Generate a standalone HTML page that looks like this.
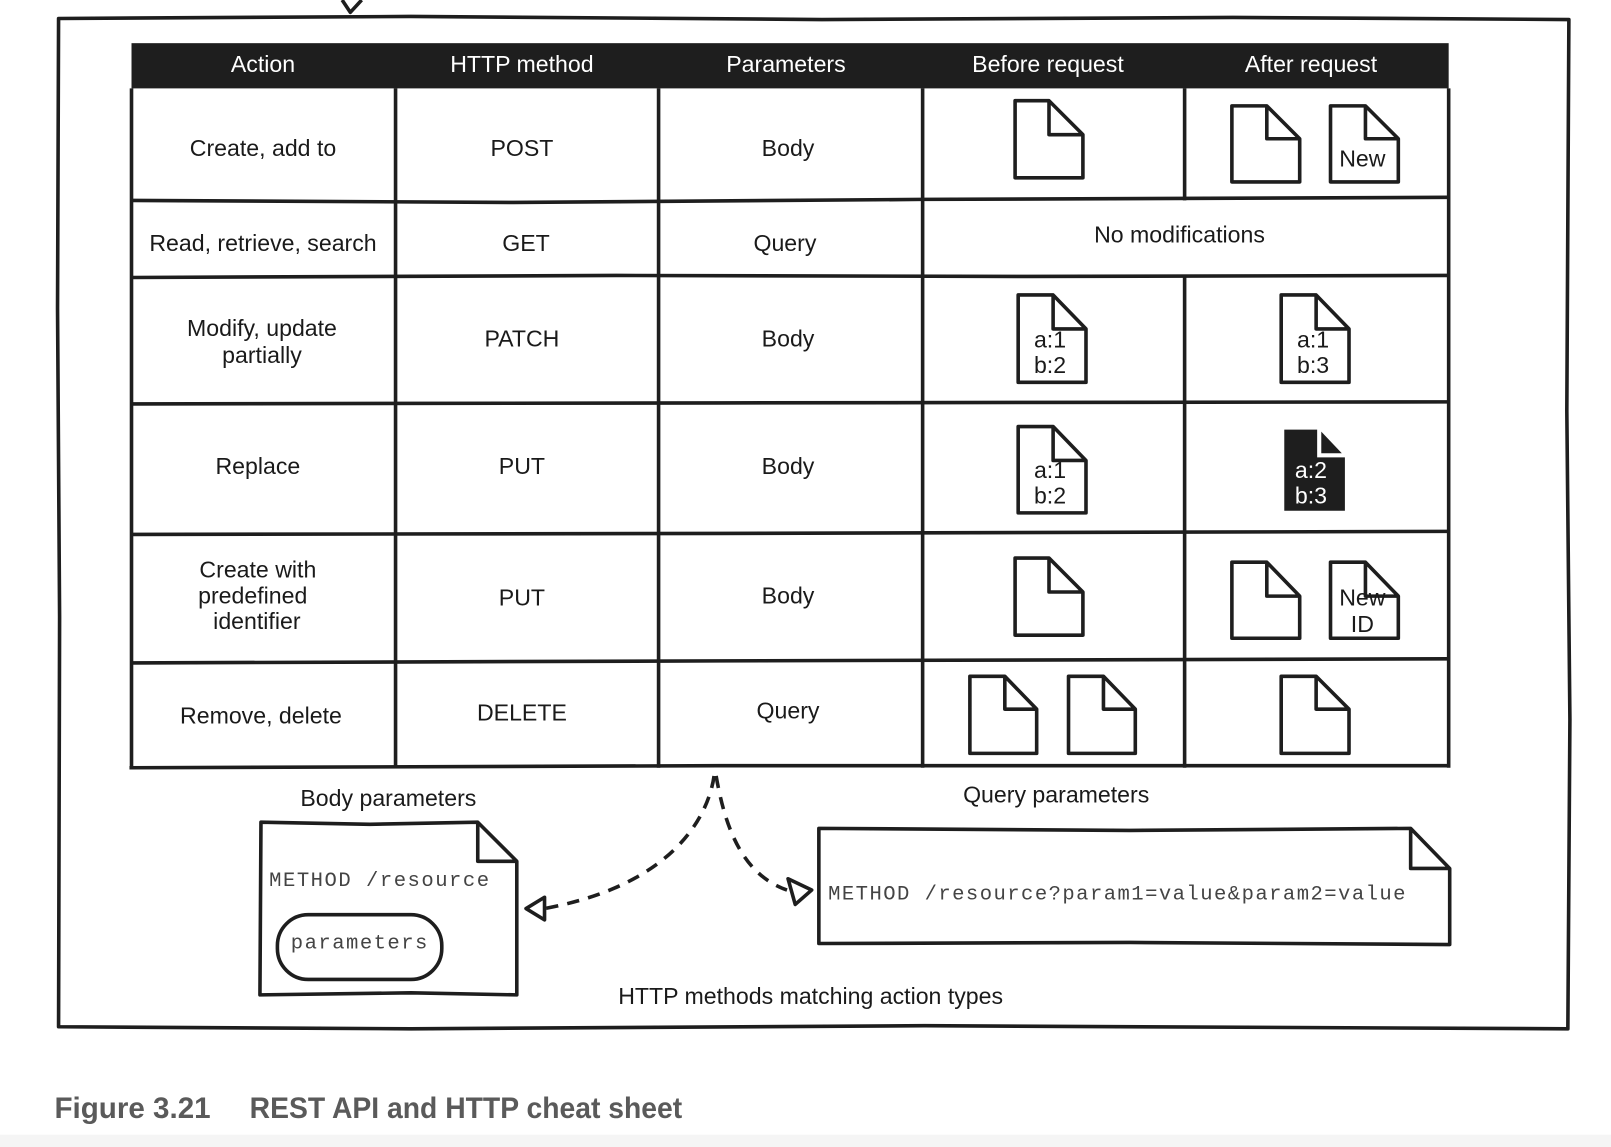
<!DOCTYPE html>
<html><head><meta charset="utf-8"><style>
html,body{margin:0;padding:0;background:#fff;width:1611px;height:1147px;overflow:hidden}
svg{display:block}
.t{font-family:"Liberation Sans",sans-serif;font-size:22.5px;fill:#1a1a1a;text-anchor:middle}
.h{fill:#fff}
.m{font-family:"Liberation Mono",monospace;font-size:20px;fill:#444}
.ln{stroke:#1e1e1e;stroke-width:3.5;fill:none;stroke-linejoin:round}
.doc{stroke:#1e1e1e;stroke-width:3.5;fill:#fff;stroke-linejoin:round}
</style></head><body>
<svg width="1611" height="1147" viewBox="0 0 1568 1116" preserveAspectRatio="none">
<rect x="0" y="1104" width="1568" height="12" fill="#f5f5f5"/>
<path class="ln" d="M333 0 L341 12 L352 0"/>
<path class="ln" d="M57 18 L400 16 L800 19 L1200 17 L1527 19 L1525 400 L1528 700 L1526 1001 L900 998 L400 1001 L57 999 L58 600 L56 300 Z"/>
<rect x="128" y="42" width="1282" height="44" fill="#1e1e1e"/>
<g class="t h">
<text x="256" y="70">Action</text>
<text x="508" y="70">HTTP method</text>
<text x="765" y="70">Parameters</text>
<text x="1020" y="70">Before request</text>
<text x="1276" y="70">After request</text>
</g>
<g class="ln">
<path d="M128 86 V747"/><path d="M385 86 V747"/><path d="M641 86 V747"/><path d="M898 86 V747"/><path d="M1153 86 V195 M1153 270 V747"/><path d="M1410 86 V747"/>
<path d="M128 195 L500 197 L898 194 L1410 192"/>
<path d="M128 270 L600 268 L1000 269 L1410 268"/>
<path d="M128 393 L700 392 L1410 391"/>
<path d="M128 520 L700 519 L1410 517"/>
<path d="M128 645 L700 643 L1410 641"/>
<path d="M126 747 L700 745 L1410 745"/>
</g>
<g class="t">
<text x="256" y="152">Create, add to</text><text x="508" y="152">POST</text><text x="767" y="152">Body</text>
<text x="256" y="244">Read, retrieve, search</text><text x="512" y="244">GET</text><text x="764" y="244">Query</text><text x="1148" y="236">No modifications</text>
<text x="255" y="327">Modify, update</text><text x="255" y="353">partially</text><text x="508" y="337">PATCH</text><text x="767" y="337">Body</text>
<text x="251" y="461">Replace</text><text x="508" y="461">PUT</text><text x="767" y="461">Body</text>
<text x="251" y="562">Create with</text><text x="246" y="587">predefined</text><text x="250" y="612">identifier</text><text x="508" y="589">PUT</text><text x="767" y="587">Body</text>
<text x="254" y="704">Remove, delete</text><text x="508" y="701">DELETE</text><text x="767" y="699">Query</text>
</g>
<g class="doc">
<path d="M988 98 H1021 L1054 131 V173 H988 Z M1021 98 V131 H1054"/>
<path d="M1199 103 H1233 L1265 135 V177 H1199 Z M1233 103 V135 H1265"/>
<path d="M1295 103 H1329 L1361 135 V177 H1295 Z M1329 103 V135 H1361"/>
<path d="M991 287 H1025 L1057 320 V372 H991 Z M1025 287 V320 H1057"/>
<path d="M1247 287 H1281 L1313 320 V372 H1247 Z M1281 287 V320 H1313"/>
<path d="M991 415 H1025 L1057 448 V499 H991 Z M1025 415 V448 H1057"/>
<path d="M988 543 H1021 L1054 576 V618 H988 Z M1021 543 V576 H1054"/>
<path d="M1199 547 H1233 L1265 580 V621 H1199 Z M1233 547 V580 H1265"/>
<path d="M1295 547 H1329 L1361 580 V621 H1295 Z M1329 547 V580 H1361"/>
<path d="M944 658 H978 L1009 690 V733 H944 Z M978 658 V690 H1009"/>
<path d="M1040 658 H1074 L1105 690 V733 H1040 Z M1074 658 V690 H1105"/>
<path d="M1247 658 H1281 L1313 690 V733 H1247 Z M1281 658 V690 H1313"/>
</g>
<path d="M1250 418 H1282 V445 H1309 V497 H1250 Z" fill="#1e1e1e"/>
<path d="M1286 420 L1306 441 H1286 Z" fill="#1e1e1e"/>
<g class="t">
<text x="1326" y="162">New</text>
<text x="1022" y="338">a:1</text><text x="1022" y="363">b:2</text>
<text x="1278" y="338">a:1</text><text x="1278" y="363">b:3</text>
<text x="1022" y="465">a:1</text><text x="1022" y="490">b:2</text>
<text x="1276" y="465" class="h">a:2</text><text x="1276" y="490" class="h">b:3</text>
<text x="1326" y="589">New</text><text x="1326" y="615">ID</text>
</g>
<g class="t">
<text x="378" y="784">Body parameters</text>
<text x="1028" y="781">Query parameters</text>
<text x="789" y="977">HTTP methods matching action types</text>
</g>
<path class="doc" d="M254 800 L360 802 L465 800 L503 838 V968 L400 966 L253 968 Z M465 800 V838 H503"/>
<rect class="ln" x="270" y="890" width="160" height="63" rx="30"/>
<text class="m" x="262" y="862" textLength="214" lengthAdjust="spacing">METHOD /resource</text>
<text class="m" x="283" y="923" textLength="133" lengthAdjust="spacing">parameters</text>
<path class="doc" d="M797 806 L1100 808 L1373 806 L1411 845 V919 L1100 917 L797 918 Z M1373 806 V845 H1411"/>
<text class="m" x="806" y="875" textLength="562" lengthAdjust="spacing">METHOD /resource?param1=value&amp;param2=value</text>
<path class="ln" stroke-dasharray="12 9" d="M695 755 C690 790 660 860 530 884"/>
<path class="ln" stroke-dasharray="12 9" d="M697 755 C705 800 720 850 766 866"/>
<path class="ln" d="M530 873 L512 884 L530 895 Z" fill="#fff"/>
<path class="ln" d="M767 855 L790 866 L774 880 Z" fill="#fff"/>
<g style="font-family:'Liberation Sans Narrow','Liberation Sans',sans-serif;font-weight:bold;font-size:29px;fill:#5a5a5a">
<text x="53" y="1088" textLength="152" lengthAdjust="spacingAndGlyphs">Figure 3.21</text>
<text x="243" y="1088" textLength="421" lengthAdjust="spacingAndGlyphs">REST API and HTTP cheat sheet</text>
</g>
</svg>
</body></html>
